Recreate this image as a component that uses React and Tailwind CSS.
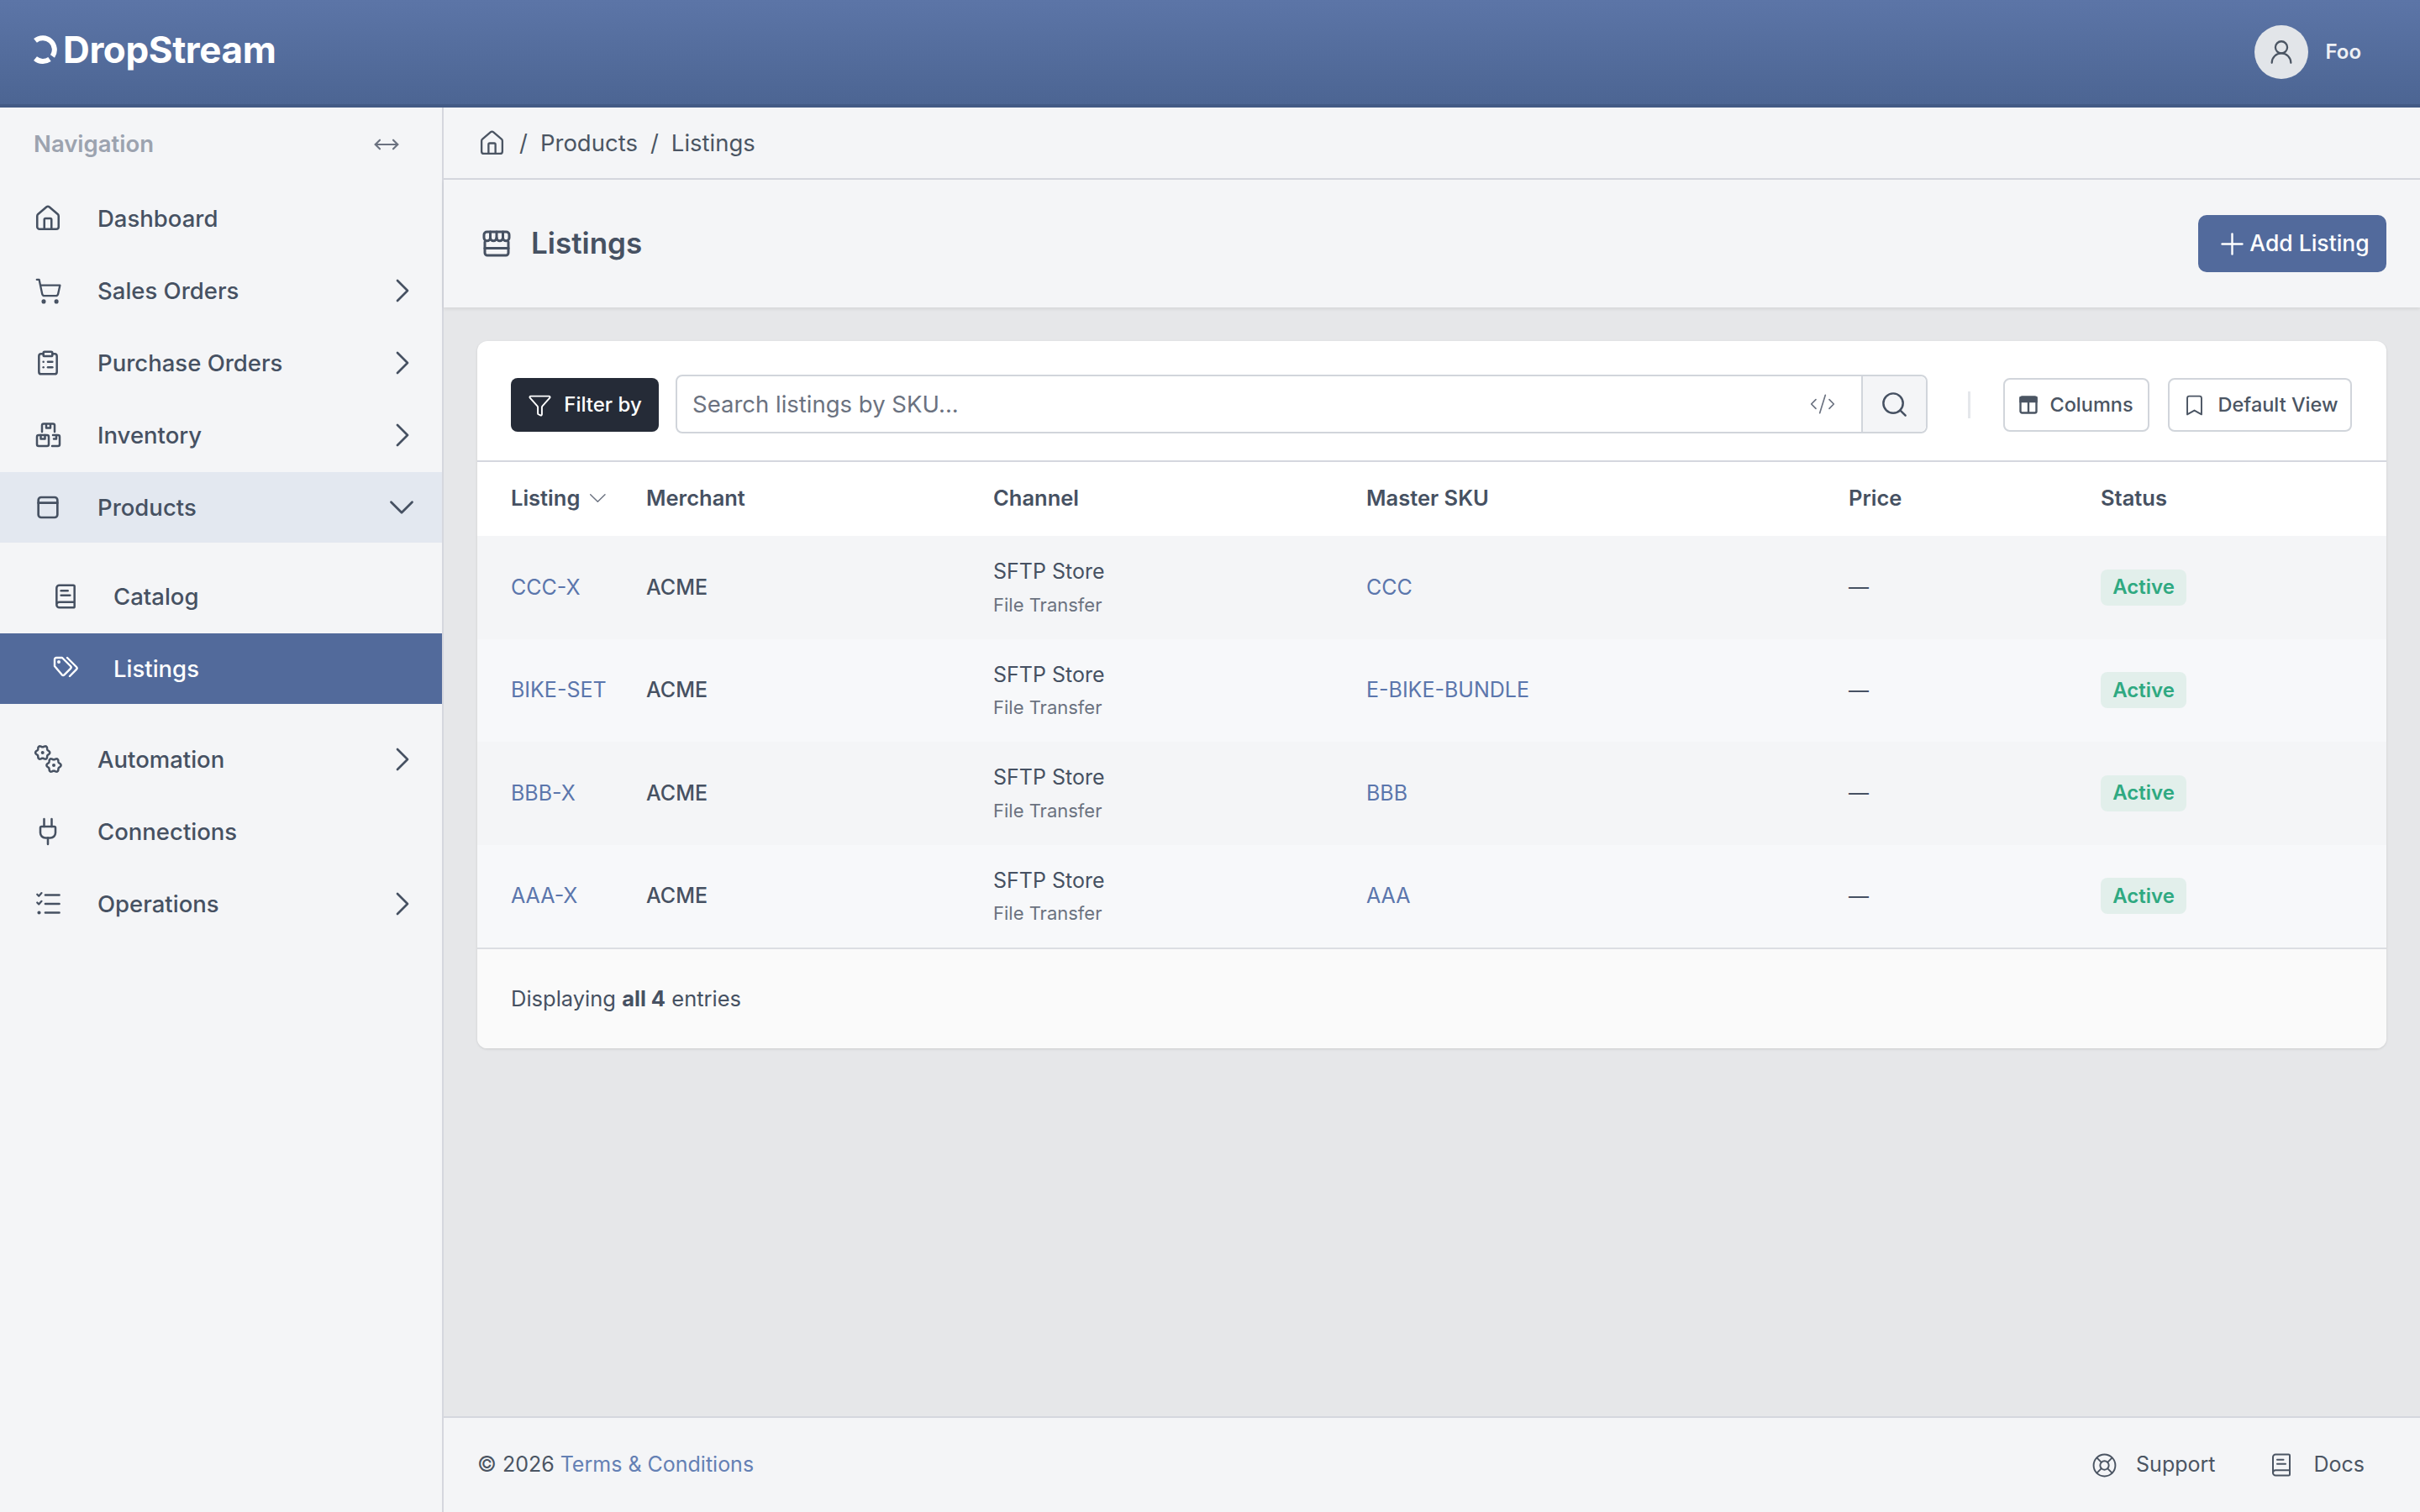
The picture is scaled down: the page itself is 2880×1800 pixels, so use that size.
import React from 'react';
import {
  Bookmark, BookText, ChevronDown, ChevronRight, ClipboardList, CodeXml,
  Funnel, House, LifeBuoy, MoveHorizontal, Plug, Plus, Search, ShoppingCart, UserRound,
} from 'lucide-react';

const FONT = { fontFamily: 'Inter, "Liberation Sans", sans-serif' };

const LogoMark = () => (
  <svg width="28" height="34" viewBox="0 0 28 34" fill="none" stroke="#fff" strokeWidth="6">
    <path d="M2 6.4 A14 14 0 0 1 22.5 25" />
    <path d="M19 28.5 A14 14 0 0 1 2 27.6" />
  </svg>
);

const BoxIcon = () => (
  <svg width="32" height="32" viewBox="0 0 24 24" fill="none" stroke="currentColor" strokeWidth="2" strokeLinecap="round" strokeLinejoin="round">
    <rect x="3.5" y="3" width="17" height="18" rx="2.5" />
    <path d="M3.5 8h17" />
  </svg>
);

const PackagesIcon = () => (
  <svg width="32" height="32" viewBox="0 0 32 32" fill="none" stroke="currentColor" strokeWidth="2.5" strokeLinecap="round" strokeLinejoin="round">
    <path d="M9 12V4.5a2 2 0 0 1 2-2h11a2 2 0 0 1 2 2V12M14 2.5v5h5v-5" />
    <rect x="3" y="16" width="14" height="13" rx="2" />
    <path d="M7.5 16v4.5h5V16" />
    <path d="M22 16h6a2 2 0 0 1 2 2v9a2 2 0 0 1-2 2h-7M26 16v4.5h-3" />
  </svg>
);

const TagsIcon = () => (
  <svg width="32" height="32" viewBox="0 0 32 32" fill="none" stroke="currentColor" strokeWidth="2.4" strokeLinecap="round" strokeLinejoin="round">
    <path d="M3 5a2 2 0 0 1 2-2h7l10 10a2 2 0 0 1 0 2.8l-7.5 7.5a2 2 0 0 1-2.8 0L3 13Z" />
    <path d="M18 3l11 11a2 2 0 0 1 0 2.8L21 25" />
    <circle cx="8" cy="8" r="0.8" fill="currentColor" />
  </svg>
);

// six lobed outline for the automation cogs
const gearPath = (cx, cy, r) => {
  const pts = [];
  for (let i = 0; i < 72; i++) {
    const a = (i / 72) * Math.PI * 2;
    const rad = r * (1 + 0.13 * Math.cos(6 * a));
    pts.push(`${(cx + rad * Math.cos(a)).toFixed(2)} ${(cy + rad * Math.sin(a)).toFixed(2)}`);
  }
  return `M${pts.join('L')}Z`;
};

const GearsIcon = () => (
  <svg width="36" height="36" viewBox="0 0 36 36" fill="none" stroke="currentColor" strokeWidth="2.5" strokeLinejoin="round">
    <path d={gearPath(11.7, 10, 7.6)} />
    <path d={gearPath(25, 25, 7.6)} />
    <circle cx="11.7" cy="10" r="2" fill="currentColor" stroke="none" />
    <circle cx="25" cy="25" r="2" fill="currentColor" stroke="none" />
  </svg>
);

const ChecksIcon = () => (
  <svg width="36" height="36" viewBox="0 0 24 24" fill="none" stroke="currentColor" strokeWidth="1.8" strokeLinecap="round" strokeLinejoin="round">
    <path d="M10 5h11M10 12h11M10 19h11" />
    <path d="M3.5 4.5l1.3 1.3L7 3.4M3.5 11l1.3 1.3L7 9.9" strokeWidth="1.5" />
    <circle cx="5" cy="19" r="0.5" fill="currentColor" />
  </svg>
);

const StoreIcon = () => (
  <svg width="34" height="32" viewBox="0 0 34 32" fill="none" stroke="currentColor" strokeWidth="3" strokeLinecap="round" strokeLinejoin="round" className="ml-1.5">
    <path d="M3 14v13a3 3 0 0 0 3 3h22a3 3 0 0 0 3-3V14" />
    <path d="M3 21.5h28" />
    <path d="M5.5 2h23a3.5 3.5 0 0 1 3.5 3.5V9a3.75 3.75 0 0 1-7.5 0a3.75 3.75 0 0 1-7.5 0a3.75 3.75 0 0 1-7.5 0a3.75 3.75 0 0 1-7.5 0V5.5A3.5 3.5 0 0 1 5.5 2Z" />
    <path d="M9.5 2v7M17 2v7M24.5 2v7" />
  </svg>
);

const ColumnsIcon = () => (
  <svg width="22" height="22" viewBox="0 0 22 22" fill="none" stroke="currentColor" strokeWidth="2.4">
    <rect x="1.5" y="1.5" width="19" height="19" rx="2" />
    <path d="M1.5 2.5h19v4.5h-19Z" fill="currentColor" />
    <path d="M11 7v13" />
  </svg>
);

const NavRow = ({ icon, label, chevron, sub, active, open }) => (
  <div
    className={`flex h-[84px] items-center text-[27.5px] font-medium ${sub ? 'pl-[60px]' : 'pl-[39px]'} ${
      active ? 'bg-[#526a9b] text-white' : open ? 'bg-[#e3e8f0] text-[#465162]' : 'text-[#465162]'
    }`}
  >
    <span className="flex w-[36px] items-center justify-center">{icon}</span>
    <span className={`pt-px ${sub ? 'ml-[39px]' : 'ml-[41px]'}`}>{label}</span>
    {chevron && <ChevronRight size={48} strokeWidth={1.35} className="ml-auto mr-[23px]" />}
    {open && <ChevronDown size={50} strokeWidth={1.35} className="ml-auto mr-[23px]" />}
  </div>
);

const rows = [
  { listing: 'CCC-X', sku: 'CCC', bg: 'bg-[#f4f5f7]' },
  { listing: 'BIKE-SET', sku: 'E-BIKE-BUNDLE', bg: 'bg-[#f7f8fa]' },
  { listing: 'BBB-X', sku: 'BBB', bg: 'bg-[#f4f5f7]' },
  { listing: 'AAA-X', sku: 'AAA', bg: 'bg-[#f7f8fa]' },
];

const GRID = 'grid grid-cols-[161px_413px_444px_574px_299px_1fr] items-center';

const App = () => (
  <div style={FONT} className="flex h-[1800px] w-[2880px] flex-col overflow-hidden bg-[#e6e7e9]">
    <header className="flex h-[128px] shrink-0 items-center border-b-4 border-[#435a85] bg-gradient-to-b from-[#5c75a7] to-[#4c6593] pl-10 pr-[70px]">
      <div className="flex items-center pb-[6px]">
        <LogoMark />
        <span className="ml-[7px] text-[44px] leading-none font-bold tracking-[-0.4px] text-white">DropStream</span>
      </div>
      <div className="ml-auto flex items-center">
        <div className="flex h-[64px] w-[64px] items-center justify-center rounded-full bg-[#e2e5e9] text-[#4b5563]">
          <UserRound size={34} strokeWidth={1.6} />
        </div>
        <span className="ml-5 text-[24px] font-semibold text-[#eef0f4]">Foo</span>
      </div>
    </header>

    <div className="flex min-h-0 flex-1">
      <aside className="w-[528px] shrink-0 border-r-2 border-[#d5d7de] bg-[#f4f5f7]">
        <div className="flex h-[90px] items-center justify-between pb-[2px] pl-10 pr-[50px]">
          <span className="text-[27.5px] font-semibold text-[#9ca3af]">Navigation</span>
          <MoveHorizontal size={32} strokeWidth={1.6} className="text-[#6b7280]" />
        </div>
        <nav className="flex flex-col gap-[2px]">
          <NavRow icon={<House size={34} strokeWidth={1.8} />} label="Dashboard" />
          <NavRow icon={<ShoppingCart size={33} strokeWidth={1.7} />} label="Sales Orders" chevron />
          <NavRow icon={<ClipboardList size={32} strokeWidth={1.9} />} label="Purchase Orders" chevron />
          <NavRow icon={<PackagesIcon />} label="Inventory" chevron />
          <NavRow icon={<BoxIcon />} label="Products" open />
          <div className="flex flex-col gap-[2px] pt-5 pb-[22px]">
            <NavRow sub icon={<BookText size={32} strokeWidth={1.9} />} label="Catalog" />
            <NavRow sub active icon={<TagsIcon />} label="Listings" />
          </div>
          <NavRow icon={<GearsIcon />} label="Automation" chevron />
          <NavRow icon={<Plug size={36} strokeWidth={1.7} />} label="Connections" />
          <NavRow icon={<ChecksIcon />} label="Operations" chevron />
        </nav>
      </aside>

      <main className="flex min-w-0 flex-1 flex-col">
        <div className="flex h-[86px] shrink-0 items-center border-b-2 border-[#d5d7de] bg-[#f4f5f7] pl-10 text-[27.5px] text-[#4b5563]">
          <House size={33} strokeWidth={1.7} className="ml-[1px]" />
          <span className="ml-[16px] pt-px">/</span>
          <span className="ml-[15px] pt-px">Products</span>
          <span className="ml-[15px] pt-px">/</span>
          <span className="ml-[15px] pt-px">Listings</span>
        </div>
        <div className="z-10 flex h-[152px] shrink-0 items-center justify-between bg-[#f4f5f7] pl-10 pr-10 shadow-[0_2px_4px_rgba(0,0,0,0.08)]">
          <div className="flex items-center text-[#465162]">
            <StoreIcon />
            <h1 className="ml-[24px] -mt-[2px] text-[35px] font-semibold">Listings</h1>
          </div>
          <button className="flex h-[68px] w-[224px] items-center justify-center rounded-[10px] bg-[#526a9c] text-[26.5px] font-medium text-white">
            <Plus size={41} strokeWidth={1.4} />
            <span>Add Listing</span>
          </button>
        </div>

        <div className="flex-1 px-10 pt-10">
          <section className="overflow-hidden rounded-xl bg-white shadow-[0_1px_3px_rgba(0,0,0,0.12)]">
            <div className="flex h-[144px] items-center border-b-2 border-[#d5d7de] pt-[10px] pl-10 pr-10">
              <button className="flex h-[64px] w-[176px] items-center justify-center gap-[14px] rounded-lg bg-[#252b37] text-[24px] font-medium text-white">
                <Funnel size={29} strokeWidth={1.6} />
                Filter by
              </button>
              <div className="ml-5 -mt-[2px] flex h-[70px] w-[1490px] items-center rounded-lg border-2 border-[#d1d5db]">
                <span className="flex-1 pl-[18px] pt-px text-[27.5px] text-[#6b7280]">Search listings by SKU...</span>
                <CodeXml size={32} strokeWidth={1.25} className="mr-[30px] text-[#6b7280]" />
                <span className="flex h-full w-[77px] items-center justify-center rounded-r-lg border-l-2 border-[#d1d5db] bg-[#f4f5f7] text-[#465162]">
                  <Search size={35} strokeWidth={1.7} />
                </span>
              </div>
              <span className="ml-[48px] h-[32px] w-[3px] bg-[#e5e7eb]" />
              <button className="ml-[39px] flex h-[64px] w-[174px] items-center justify-center gap-[14px] rounded-lg border-2 border-[#d1d5db] text-[23.5px] font-medium text-[#4b5563]">
                <ColumnsIcon />
                Columns
              </button>
              <button className="ml-[22px] flex h-[64px] w-[219px] items-center justify-center gap-[14px] rounded-lg border-2 border-[#d1d5db] text-[23.5px] font-medium text-[#4b5563]">
                <Bookmark size={29} strokeWidth={1.6} />
                Default View
              </button>
            </div>

            <div className={`${GRID} h-[88px] pb-[2px] text-[25.5px] font-semibold text-[#465162]`}>
              <span className="flex items-center pl-10">Listing<ChevronDown size={44} strokeWidth={1} className="ml-[4px] text-[#6b7280]" /></span>
              <span className="pl-10">Merchant</span>
              <span className="pl-10">Channel</span>
              <span className="pl-10">Master SKU</span>
              <span className="pl-10">Price</span>
              <span className="pl-[41px]">Status</span>
            </div>

            {rows.map(r => (
              <div key={r.listing} className={`${GRID} h-[122.5px] text-[25px] ${r.bg}`}>
                <span className="pl-10 text-[#5b76ac]">{r.listing}</span>
                <span className="pl-10 font-medium text-[#465162]">ACME</span>
                <div className="pl-10">
                  <div className="text-[#465162]">SFTP Store</div>
                  <div className="mt-1 text-[22px] text-[#6b7280]">File Transfer</div>
                </div>
                <span className="pl-10 text-[#5b76ac]">{r.sku}</span>
                <span className="pl-10 text-[24px] text-[#465162]">—</span>
                <span className="pl-[41px]">
                  <span className="inline-flex h-[43px] w-[102px] items-center justify-center rounded-lg bg-[#e2efeb] text-[24px] font-semibold text-[#2fa981]">Active</span>
                </span>
              </div>
            ))}

            <div className="flex h-[120px] items-center border-t-2 border-[#dcdee2] bg-[#fafafa] pl-10 text-[25.5px] text-[#465162]">
              <span>Displaying <b className="font-bold">all 4</b> entries</span>
            </div>
          </section>
        </div>

        <footer className="flex h-[114px] shrink-0 items-center border-t-2 border-[#d5d7de] bg-[#f4f5f7] pl-10 pr-[66px] text-[25px] text-[#4b5563]">
          <span>© 2026 <span className="text-[#6480b4]">Terms &amp; Conditions</span></span>
          <div className="ml-auto flex items-center">
            <LifeBuoy size={31} strokeWidth={1.5} />
            <span className="ml-[22px]">Support</span>
            <BookText size={30} strokeWidth={1.6} className="ml-[64px]" />
            <span className="ml-[23px]">Docs</span>
          </div>
        </footer>
      </main>
    </div>
  </div>
);

export default App;
